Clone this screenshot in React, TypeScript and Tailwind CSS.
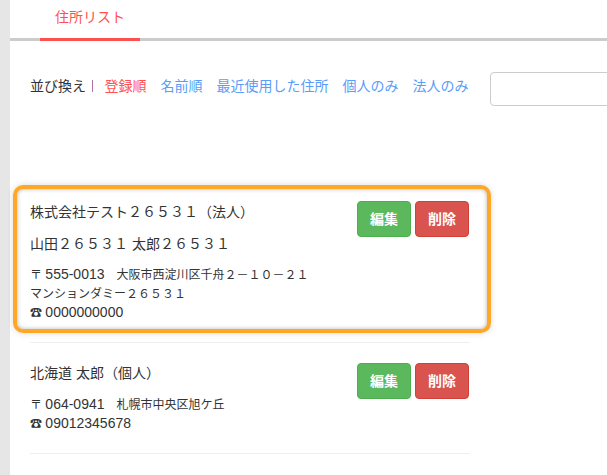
const fontStack = { fontFamily: '"Liberation Sans", "Noto Sans CJK JP", sans-serif' };

function ActionButtons() {
  return (
    <div className="flex gap-1 mr-px">
      <button className="w-[54px] h-9 rounded bg-[#5cb85c] border border-[#4cae4c] text-white text-sm font-bold">編集</button>
      <button className="w-[54px] h-9 rounded bg-[#d9534f] border border-[#d43f3a] text-white text-sm font-bold">削除</button>
    </div>
  );
}

function Num({ children }: { children: string }) {
  return <span className="text-sm leading-none">{children}</span>;
}

export default function App() {
  return (
    <div style={fontStack} className="w-[607px] h-[475px] overflow-hidden bg-white flex text-[#333]">
      <div className="w-2.5 shrink-0 bg-[#e6e6e6]" />
      <div className="flex-1 min-w-0">
        <div className="h-[41px] border-b-[3px] border-[#cccccc] pl-[30px]">
          <div className="w-[100px] h-[41px] border-b-[3px] border-[#ff5050] text-[#ff5050] text-sm text-center pt-[7px] leading-5">
            住所リスト
          </div>
        </div>

        <div className="flex items-center pl-5 pt-[31px] text-sm h-[65px]">
          <span className="w-[55px] shrink-0 whitespace-nowrap -mt-1.5">並び換え</span>
          <span className="w-px h-3 shrink-0 ml-[7px] bg-[#b070a8] -mt-1.5" />
          <div className="flex shrink-0 gap-[14px] ml-[11.5px] text-[#5a9cf8] whitespace-nowrap -mt-1.5">
            <a className="text-[#ff5050]">登録順</a>
            <a>名前順</a>
            <a>最近使用した住所</a>
            <a>個人のみ</a>
            <a>法人のみ</a>
          </div>
          <input className="ml-[21.5px] w-[150px] h-[34px] shrink-0 border border-[#cccccc] rounded" />
        </div>

        <div className="w-[478px] mt-[79px] ml-[3px]">
          <div className="h-[148px] border-4 border-[#ffa726] rounded-[10px] shadow-[0_0_6px_rgba(0,0,0,0.15),inset_0_0_4px_rgba(0,0,0,0.3)] flex justify-between pl-[13px] pr-[17px] pt-3 text-[#333]">
            <div>
              <div className="text-sm leading-5 mt-px">株式会社テスト２６５３１（法人）</div>
              <div className="text-sm leading-5 mt-3">山田２６５３１ 太郎２６５３１</div>
              <div className="text-xs leading-[19px] mt-3">
                <div>〒 <Num>555-0013</Num>　大阪市西淀川区千舟２－１０－２１</div>
                <div>マンションダミー２６５３１</div>
                <div>☎ <Num>0000000000</Num></div>
              </div>
            </div>
            <ActionButtons />
          </div>

          <div className="ml-[17px] mr-[21px] mt-[9px] border-t border-[#eeeeee] h-[112px] border-b flex justify-between pt-5">
            <div>
              <div className="text-sm leading-5">北海道 太郎（個人）</div>
              <div className="text-xs leading-[19px] mt-[13px]">
                <div>〒 <Num>064-0941</Num>　札幌市中央区旭ケ丘</div>
                <div>☎ <Num>09012345678</Num></div>
              </div>
            </div>
            <ActionButtons />
          </div>
        </div>
      </div>
    </div>
  );
}
